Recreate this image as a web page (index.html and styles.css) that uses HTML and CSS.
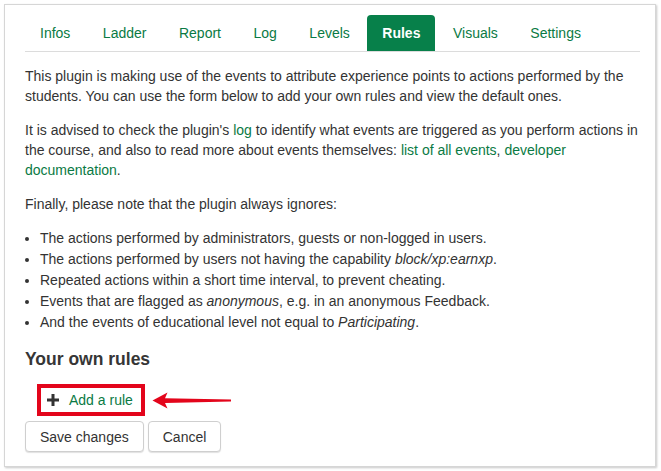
FILE: index.html
```html
<!DOCTYPE html>
<html>
<head>
<meta charset="utf-8">
<link rel="stylesheet" href="styles.css">
</head>
<body>
<div class="frame">
  <ul class="tabs">
    <li><a class="tab">Infos</a></li>
    <li><a class="tab">Ladder</a></li>
    <li><a class="tab">Report</a></li>
    <li><a class="tab">Log</a></li>
    <li><a class="tab">Levels</a></li>
    <li><a class="tab active">Rules</a></li>
    <li><a class="tab">Visuals</a></li>
    <li><a class="tab">Settings</a></li>
  </ul>
  <p class="para">This plugin is making use of the events to attribute experience points to actions performed by the students. You can use the form below to add your own rules and view the default ones.</p>
  <p class="para">It is advised to check the plugin's <a class="link">log</a> to identify what events are triggered as you perform actions in the course, and also to read more about events themselves: <a class="link">list of all events</a>, <a class="link">developer documentation</a>.</p>
  <p class="para">Finally, please note that the plugin always ignores:</p>
  <ul class="list">
    <li>The actions performed by administrators, guests or non-logged in users.</li>
    <li>The actions performed by users not having the capability <em>block/xp:earnxp</em>.</li>
    <li>Repeated actions within a short time interval, to prevent cheating.</li>
    <li>Events that are flagged as <em>anonymous</em>, e.g. in an anonymous Feedback.</li>
    <li>And the events of educational level not equal to <em>Participating</em>.</li>
  </ul>
  <h3 class="heading">Your own rules</h3>
  <div class="add-row">
    <div class="highlight">
      <svg class="plus" width="12" height="12" viewBox="0 0 12 12"><rect x="4.5" y="0" width="3" height="12" fill="#333"/><rect x="0" y="4.5" width="12" height="3" fill="#333"/></svg>
      <a class="link add-link">Add a rule</a>
    </div>
    <svg class="arrow" width="82" height="19" viewBox="0 0 82 19"><path d="M1.5,9.5 L16.5,1.5 L14,7.2 L80,8.4 L80,10.4 L14,12 L16.5,17.5 Z" fill="#e3051b"/></svg>
  </div>
  <div class="buttons">
    <button class="btn">Save changes</button>
    <button class="btn">Cancel</button>
  </div>
</div>
</body>
</html>
```
FILE: styles.css
```css
html, body {
  margin: 0;
  padding: 0;
  background: #ffffff;
}
body {
  font-family: "Liberation Sans", Arial, Helvetica, sans-serif;
  font-size: 14px;
  line-height: 20px;
  color: #333333;
}
.frame {
  margin: 4px;
  width: 652px;
  height: 463px;
  box-sizing: border-box;
  border: 1px solid #d6d6d6;
  box-shadow: 1px 1px 2px rgba(0, 0, 0, 0.22);
  padding: 10px 15px 0 20px;
  background: #fff;
}
.tabs {
  display: flex;
  list-style: none;
  margin: 0 0 14px 0;
  padding: 0 0 0 0;
  border-bottom: 1px solid #dcdcdc;
}
.tabs li {
  margin-right: 2.5px;
}
.tabs li:first-child {
  margin-left: 0;
}
.tab {
  display: block;
  padding: 8px 15px;
  line-height: 20px;
  color: #0a7a44;
  border-radius: 4px 4px 0 0;
}
.tab.active {
  background: #07804a;
  color: #ffffff;
  font-weight: bold;
}
.para {
  margin: 0 0 14px 0;
}
.link {
  color: #0a7a44;
}
.list {
  margin: 0 0 15px 0;
  padding: 0 0 0 15px;
}
.list li {
  line-height: 21px;
}
.heading {
  margin: 0 0 14px 0;
  font-size: 17.5px;
  line-height: 22px;
  font-weight: bold;
  color: #363636;
}
.add-row {
  display: flex;
  align-items: center;
  margin: 0 0 5px 12px;
}
.highlight {
  display: flex;
  align-items: center;
  height: 24px;
  border: 4px solid #e3051b;
  padding: 0 8px 0 6px;
}
.plus {
  display: block;
  margin-right: 10px;
}
.arrow {
  display: block;
  margin-left: 6px;
}
.buttons {
  display: flex;
  gap: 4px;
}
.btn {
  font-family: "Liberation Sans", Arial, Helvetica, sans-serif;
  font-size: 14px;
  line-height: 20px;
  color: #333;
  background: #fff;
  border: 1px solid #cfcfcf;
  border-radius: 4px;
  padding: 5px 14px 4px;
  box-shadow: 0 1px 1px rgba(0, 0, 0, 0.12);
  margin: 0;
}
```
